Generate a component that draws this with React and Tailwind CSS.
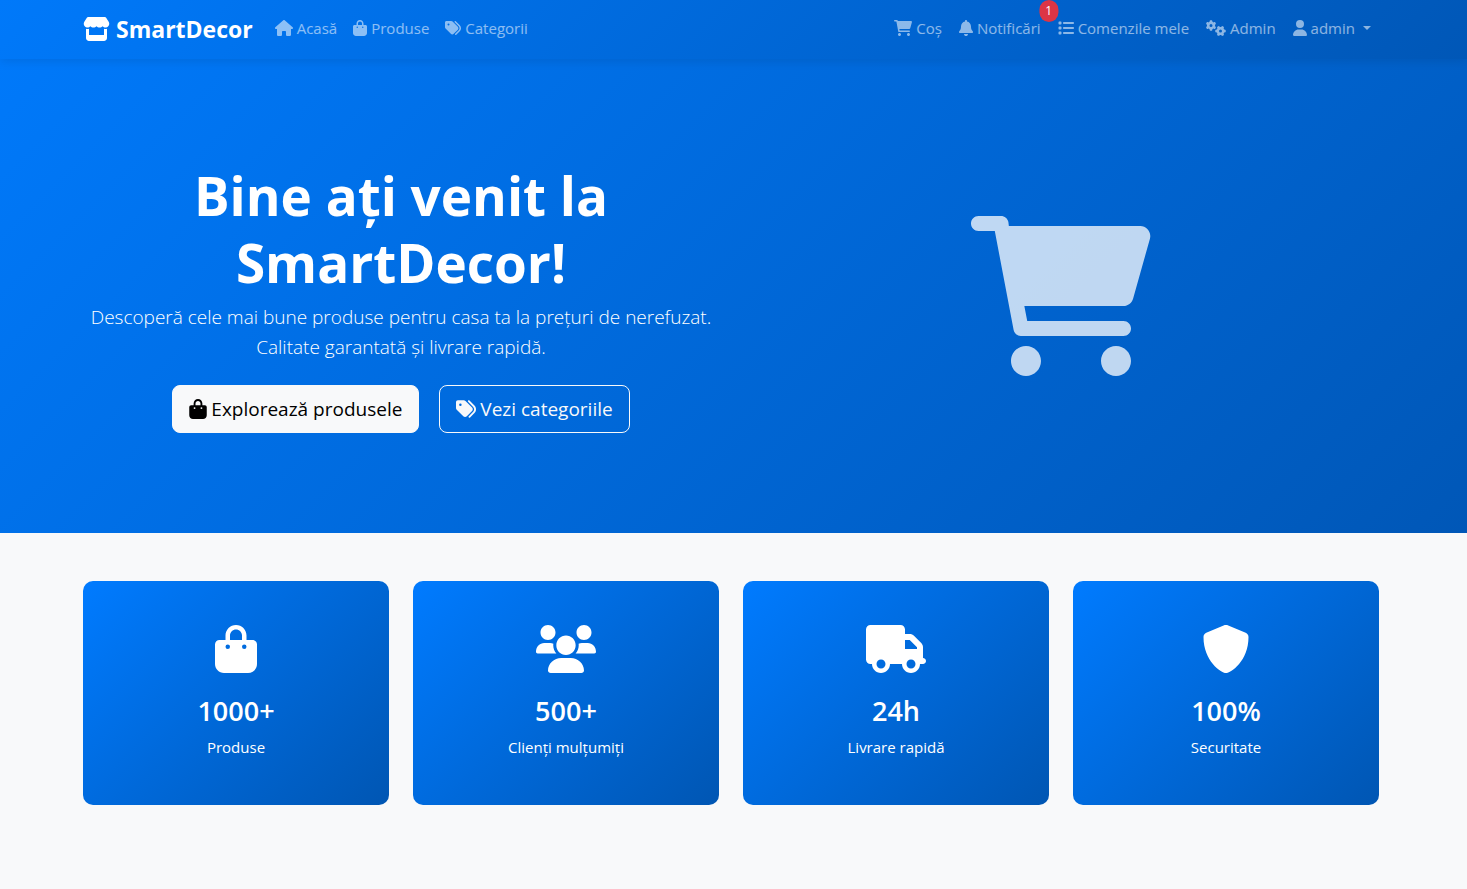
import { FaBagShopping, FaBell, FaGears, FaHouse, FaList, FaTags, FaUser } from 'react-icons/fa6'

const icons = {
  cart: {
    width: 576,
    d: 'M96 0C107.5 0 117.4 8.19 119.6 19.51L121.1 32H541.8C562.1 32 578.3 52.25 572.6 72.66L518.6 264.7C514.7 278.5 502.1 288 487.8 288H170.7L179.9 336H488C501.3 336 512 346.7 512 360C512 373.3 501.3 384 488 384H159.1C148.5 384 138.6 375.8 136.4 364.5L76.14 48H24C10.75 48 0 37.25 0 24C0 10.75 10.75 0 24 0H96zM128 464C128 437.5 149.5 416 176 416C202.5 416 224 437.5 224 464C224 490.5 202.5 512 176 512C149.5 512 128 490.5 128 464zM512 464C512 490.5 490.5 512 464 512C437.5 512 416 490.5 416 464C416 437.5 437.5 416 464 416C490.5 416 512 437.5 512 464z',
  },
  store: {
    width: 576,
    d: 'M495.5 223.2C491.6 223.7 487.6 224 483.4 224C457.4 224 434.2 212.6 418.3 195C402.4 212.6 379.2 224 353.1 224C327 224 303.8 212.6 287.9 195C272 212.6 248.9 224 222.7 224C196.7 224 173.5 212.6 157.6 195C141.7 212.6 118.5 224 92.36 224C88.3 224 84.21 223.7 80.24 223.2C24.92 215.8-1.255 150.6 28.33 103.8L85.66 13.13C90.76 4.979 99.87 0 109.6 0H466.4C476.1 0 485.2 4.978 490.3 13.13L547.6 103.8C577.3 150.7 551 215.8 495.5 223.2H495.5zM499.7 254.9C503.1 254.4 508 253.6 512 252.6V448C512 483.3 483.3 512 448 512H128C92.66 512 64 483.3 64 448V252.6C67.87 253.6 71.86 254.4 75.97 254.9L76.09 254.9C81.35 255.6 86.83 256 92.36 256C104.8 256 116.8 254.1 128 250.6V384H448V250.7C459.2 254.1 471.1 256 483.4 256C489 256 494.4 255.6 499.7 254.9L499.7 254.9z',
  },
  users: {
    width: 640,
    d: 'M319.9 320c57.41 0 103.1-46.56 103.1-104c0-57.44-46.54-104-103.1-104c-57.41 0-103.1 46.56-103.1 104C215.9 273.4 262.5 320 319.9 320zM369.9 352H270.1C191.6 352 128 411.7 128 485.3C128 500.1 140.7 512 156.4 512h327.2C499.3 512 512 500.1 512 485.3C512 411.7 448.4 352 369.9 352zM512 160c44.18 0 80-35.82 80-80S556.2 0 512 0c-44.18 0-80 35.82-80 80S467.8 160 512 160zM183.9 216c0-5.449 .9824-10.63 1.609-15.91C174.6 194.1 162.6 192 149.9 192H88.08C39.44 192 0 233.8 0 285.3C0 295.6 7.887 304 17.62 304h199.5C196.7 280.2 183.9 249.9 183.9 216zM128 160c44.18 0 80-35.82 80-80S172.2 0 128 0C83.82 0 48 35.82 48 80S83.82 160 128 160zM551.9 192h-61.84c-12.8 0-24.88 3.037-35.86 8.24C454.8 205.5 455.8 210.6 455.8 216c0 33.89-12.78 64.21-33.19 88h199.7C632.1 304 640 295.6 640 285.3C640 233.8 600.6 192 551.9 192z',
  },
  truck: {
    width: 640,
    d: 'M368 0C394.5 0 416 21.49 416 48V96H466.7C483.7 96 499.1 102.7 512 114.7L589.3 192C601.3 204 608 220.3 608 237.3V352C625.7 352 640 366.3 640 384C640 401.7 625.7 416 608 416H576C576 469 533 512 480 512C426.1 512 384 469 384 416H256C256 469 213 512 160 512C106.1 512 64 469 64 416H48C21.49 416 0 394.5 0 368V48C0 21.49 21.49 0 48 0H368zM416 160V256H544V237.3L466.7 160H416zM160 368C133.5 368 112 389.5 112 416C112 442.5 133.5 464 160 464C186.5 464 208 442.5 208 416C208 389.5 186.5 368 160 368zM480 464C506.5 464 528 442.5 528 416C528 389.5 506.5 368 480 368C453.5 368 432 389.5 432 416C432 442.5 453.5 464 480 464z',
  },
  shield: {
    width: 512,
    d: 'M496 127.1C496 381.3 309.1 512 255.1 512C204.9 512 16 385.3 16 127.1c0-19.41 11.7-36.89 29.61-44.28l191.1-80.01c4.906-2.031 13.13-3.701 18.44-3.701c5.281 0 13.58 1.67 18.46 3.701l192 80.01C484.3 90.23 496 107.7 496 127.1z',
  },
}

function Icon({ name, className }) {
  const { width, d } = icons[name]
  return (
    <svg viewBox={`0 0 ${width} 512`} fill="currentColor" className={className} aria-hidden="true">
      <path d={d} />
    </svg>
  )
}

function NavLink({ icon, label, badge }) {
  return (
    <a href="#" className="relative flex items-center gap-1 p-2 text-white/55 hover:text-white/75">
      {icon}
      {label}
      {badge && (
        <span className="absolute top-0 right-0 translate-x-1/2 -translate-y-2 rounded-full bg-[#dc3545] px-1.5 py-1 text-xs leading-[14px] text-white">
          {badge}
        </span>
      )}
    </a>
  )
}

const stats = [
  { icon: <FaBagShopping className="h-12 w-auto" />, value: '1000+', label: 'Produse' },
  { icon: <Icon name="users" className="h-12" />, value: '500+', label: 'Clienți mulțumiți' },
  { icon: <Icon name="truck" className="h-12" />, value: '24h', label: 'Livrare rapidă' },
  { icon: <Icon name="shield" className="h-12" />, value: '100%', label: 'Securitate' },
]

export default function App() {
  return (
    <div className="min-h-screen bg-[#f8f9fa] font-['Segoe_UI','Open_Sans',sans-serif] text-[15px] leading-6 text-[#212529]">
      {/* Navbar */}
      <nav className="relative bg-linear-[135deg,#0079fa,#0057b7] pr-[5px] shadow-[0_2px_10px_rgba(0,0,0,0.1)]">
        <div className="mx-auto flex max-w-[1320px] items-start px-3 pt-2 pb-[9px]">
          <a href="#" className="mr-3.5 flex items-center gap-1.5 text-[23px] leading-[42px] font-bold text-white">
            <Icon name="store" className="h-6" />
            SmartDecor
          </a>
          <div className="flex flex-1 justify-between">
            <div className="flex">
              <NavLink icon={<FaHouse className="h-4 w-[18px]" />} label="Acasă" />
              <NavLink icon={<FaBagShopping className="h-4 w-[14px]" />} label="Produse" />
              <NavLink icon={<FaTags className="h-4 w-4" />} label="Categorii" />
            </div>
            <div className="flex gap-px">
              <NavLink icon={<Icon name="cart" className="h-4" />} label="Coș" />
              <NavLink icon={<FaBell className="h-4 w-[14px]" />} label="Notificări" badge="1" />
              <NavLink icon={<FaList className="h-4 w-4" />} label="Comenzile mele" />
              <NavLink icon={<FaGears className="h-4 w-5" />} label="Admin" />
              <button type="button" className="flex items-center gap-1 p-2 text-white/55 hover:text-white/75">
                <FaUser className="h-4 w-[14px]" />
                admin
                <span className="ml-1 border-x-4 border-t-4 border-x-transparent" />
              </button>
            </div>
          </div>
        </div>
      </nav>

      {/* Hero */}
      <section className="bg-linear-[135deg,#0079fa,#0057b7] py-[100px] pr-[5px] text-center text-white">
        <div className="mx-auto grid max-w-[1320px] grid-cols-2 items-center">
          <div className="px-3">
            <h1 className="mb-1.5 pt-[3px] text-[53px] leading-[67px] font-bold">Bine ați venit la SmartDecor!</h1>
            <p className="mb-[23px] text-[19px] leading-[30px] font-light">
              Descoperă cele mai bune produse pentru casa ta la prețuri de nerefuzat. Calitate garantată și livrare rapidă.
            </p>
            <div className="flex justify-center gap-5">
              <a href="#" className="flex items-center gap-1 rounded-lg border border-[#f8f9fa] bg-[#f8f9fa] px-4 py-2 text-[19px] leading-[30px] text-black">
                <FaBagShopping className="h-5 w-[18px]" />
                Explorează produsele
              </a>
              <a href="#" className="flex items-center gap-1 rounded-lg border border-[#f8f9fa] px-4 py-2 text-[19px] leading-[30px] text-[#f8f9fa]">
                <FaTags className="h-5 w-5" />
                Vezi categoriile
              </a>
            </div>
          </div>
          <div className="flex justify-center">
            <Icon name="cart" className="h-40 opacity-75" />
          </div>
        </div>
      </section>

      {/* Stats */}
      <section className="py-12 pr-[5px]">
        <div className="mx-auto grid max-w-[1320px] grid-cols-4 gap-6 px-3">
          {stats.map((stat) => (
            <div key={stat.label} className="flex flex-col items-center rounded-[10px] bg-linear-[135deg,#007bff,#0056b3] px-4 pt-11 pb-[46px] text-white">
              {stat.icon}
              <h3 className="mt-5 mb-1.5 text-[27px] leading-9 font-semibold">{stat.value}</h3>
              <p>{stat.label}</p>
            </div>
          ))}
        </div>
      </section>
    </div>
  )
}
